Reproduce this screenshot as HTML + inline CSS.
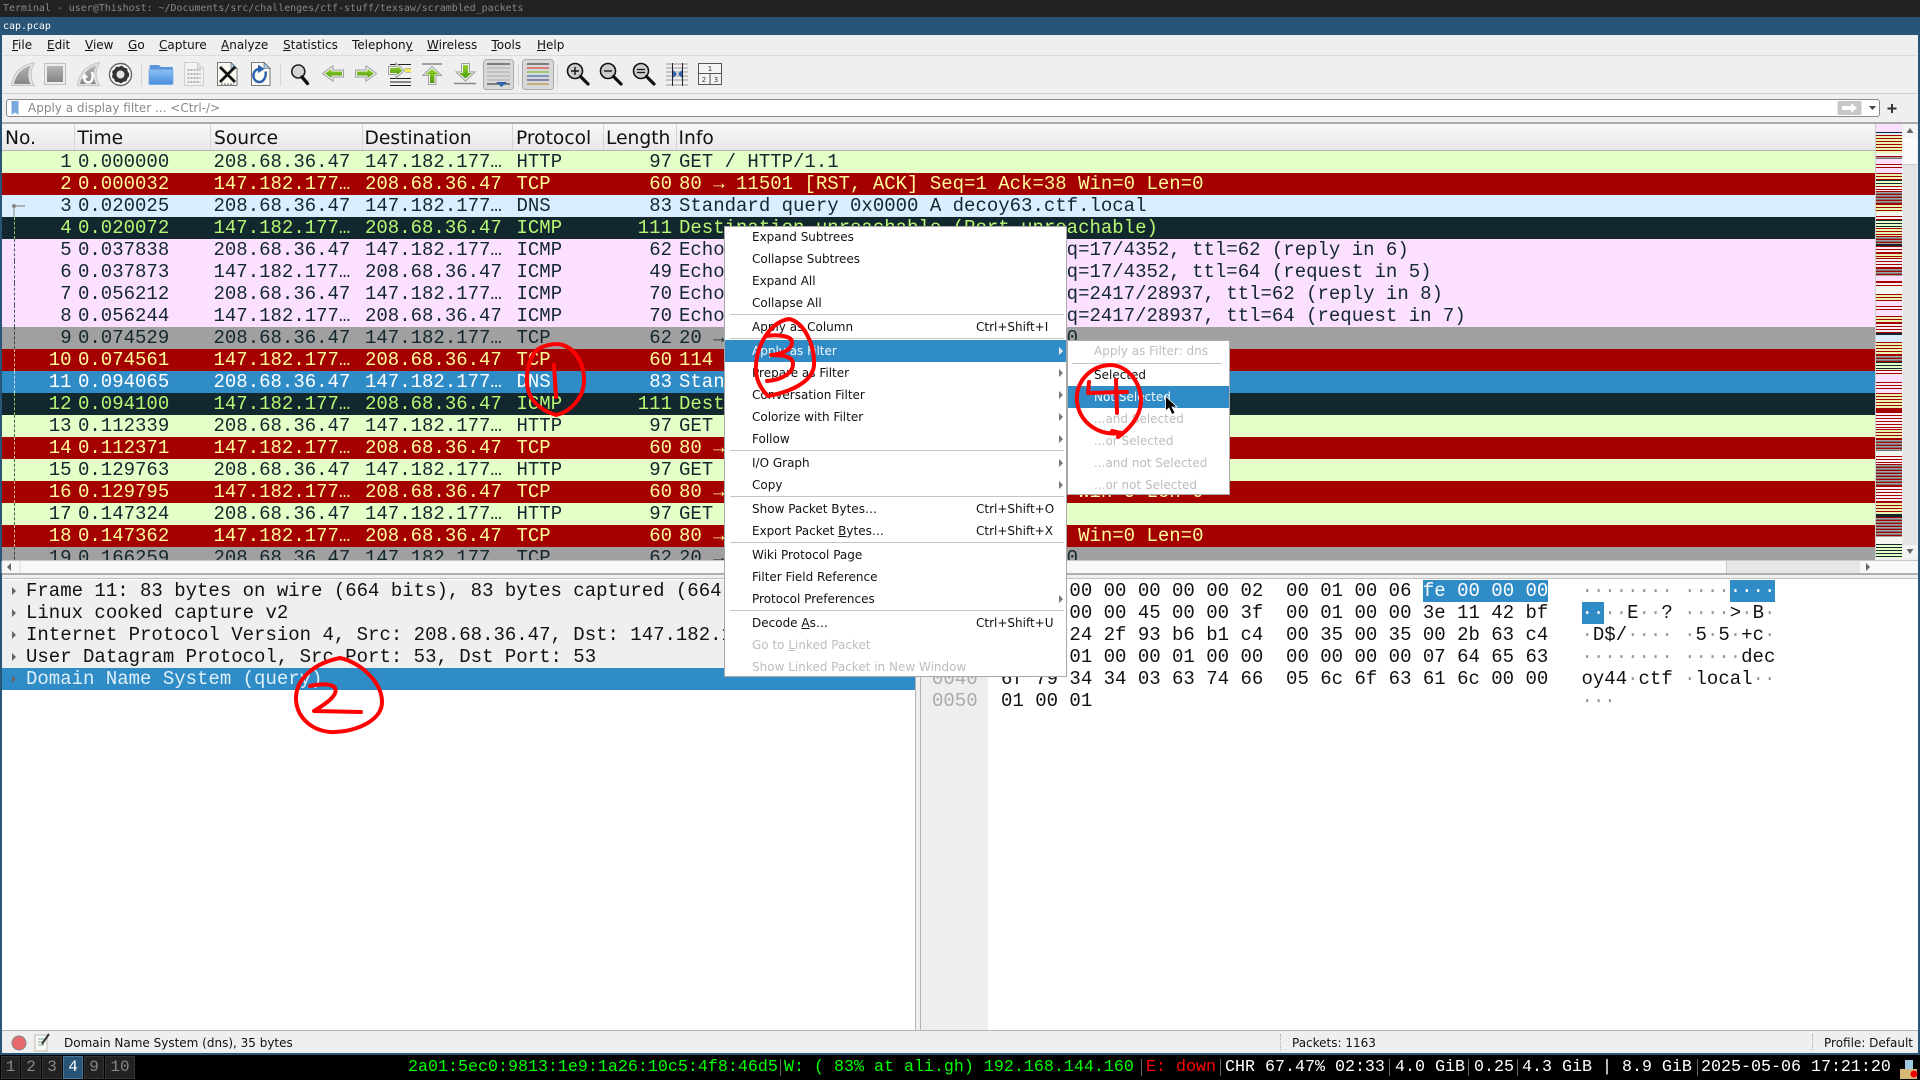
<!DOCTYPE html>
<html><head><meta charset="utf-8"><title>cap.pcap</title>
<style>
*{box-sizing:border-box}
html,body{margin:0;padding:0;width:1920px;height:1080px;overflow:hidden;background:#efefef}
body{position:relative;font-family:"DejaVu Sans","Liberation Sans",sans-serif;font-size:12px;color:#111}
.a{position:absolute}
.m{font-family:"Liberation Mono",monospace;font-size:19px;line-height:22px;white-space:pre}
.tt{font-family:"DejaVu Sans Mono",monospace;font-size:9.95px;line-height:18px;white-space:pre}
.menu span{position:absolute;top:0;line-height:20px;white-space:pre}
u{text-decoration:underline}
.h span{position:absolute;top:125px;line-height:27px;font-size:18.67px;color:#111;white-space:pre}
.h i{position:absolute;top:124px;width:1px;height:26px;background:#d4d4d4}
.r{position:absolute;left:2px;width:1873px;height:22px;overflow:hidden}
.r i{position:absolute;top:0;font-style:normal}
.r .n{left:0;width:69.6px;text-align:right}
.r .t{left:76px}.r .s{left:211.5px}.r .d{left:363px}.r .p{left:514.5px}
.r .l{left:570px;width:100px;text-align:right}.r .f{left:677px}
.r:before{content:"";position:absolute;left:12px;top:0;height:22px;border-left:1px dashed currentColor;opacity:.75}
.r.nl:before{display:none}
.G{background:#e4ffc7;color:#12272e}.R{background:#a40000;color:#fffc9c}.B{background:#daeeff;color:#12272e}
.K{background:#12272e;color:#b7f774}.P{background:#fce0ff;color:#12272e}.Y{background:#a0a0a0;color:#12272e}.S{background:#308cc6;color:#fff}
.tr{position:absolute;left:2px;width:913px;height:22px;background:#efefef;color:#111;padding-left:24px;overflow:hidden}
.tr:before{content:"";position:absolute;left:10px;top:7px;border-left:4px solid #666;border-top:4px solid transparent;border-bottom:4px solid transparent}
.hx{position:absolute;left:1001px;color:#111}.as{position:absolute;left:1581.5px;color:#111}
.off{position:absolute;left:932px;color:#aaa}
.sel{background:#308cc6;color:#fff;display:inline-block;height:22px}
.g{color:#999}
.it{position:absolute;left:27px;line-height:22px;height:22px;white-space:pre;color:#111}
.it b{position:absolute;left:252px;top:0;font-weight:normal}
.it.x{color:#bdbdbd}
.it.on{left:0;width:341px;padding-left:27px;background:#308cc6;color:#f4f8fc}
.sp{position:absolute;left:5px;height:1px;background:#c4c4c4;width:334px}
.ar{position:absolute;left:334px;border-left:4px solid #777;border-top:4px solid transparent;border-bottom:4px solid transparent}
.sub .it{left:26px}.sub .it.on{left:0;width:161px;padding-left:26px}
.bar span{position:absolute;top:0;line-height:25px;font-family:"Liberation Mono",monospace;font-size:16.67px;white-space:pre}
.ws{position:absolute;top:1056px;height:23px;background:#222;border:1px solid #333;color:#888;font-family:"Liberation Mono",monospace;font-size:16px;line-height:21px;text-align:center}
.mm div{width:100%}
.v1{background:repeating-linear-gradient(#a40000 0 1px,#e8f4b0 1px 3px)}
.v2{background:repeating-linear-gradient(#a40000 0 1px,#a0a0a0 1px 2px,#777 2px 3px)}
.v3{background:repeating-linear-gradient(#12272e 0 1px,#e4ffc7 1px 3px)}
.v4{background:#fce0ff}.v5{background:#f4f6f0}.v6{background:#a40000}.v7{background:#daeeff}.v8{background:#12272e}
.v9{background:repeating-linear-gradient(#a40000 0 1px,#fbeef5 1px 3px)}
</style></head><body>

<!-- title bars -->
<div class="a" style="left:0;top:0;width:1920px;height:17px;background:#222"></div>
<div class="a tt" style="left:3px;top:0;color:#888">Terminal - user@Thishost: ~/Documents/src/challenges/ctf-stuff/texsaw/scrambled_packets</div>
<div class="a" style="left:0;top:17px;width:1920px;height:1038px;background:#285577"></div>
<div class="a tt" style="left:3px;top:18px;color:#fff">cap.pcap</div>

<!-- window body -->
<div class="a" style="left:2px;top:35px;width:1916px;height:1018px;background:#efefef"></div>
<div class="a menu" style="left:0;top:35px;width:1900px;height:20px">
<span style="left:12px"><u>F</u>ile</span><span style="left:47px"><u>E</u>dit</span><span style="left:85px"><u>V</u>iew</span><span style="left:128px"><u>G</u>o</span><span style="left:159px"><u>C</u>apture</span><span style="left:221px"><u>A</u>nalyze</span><span style="left:283px"><u>S</u>tatistics</span><span style="left:352px">Telephon<u>y</u></span><span style="left:427px"><u>W</u>ireless</span><span style="left:491.5px"><u>T</u>ools</span><span style="left:537px"><u>H</u>elp</span>
</div>
<div class="a" style="left:2px;top:55px;width:1916px;height:1px;background:#dcdcdc"></div>
<div class="a" style="left:2px;top:93px;width:1916px;height:1px;background:#d0d0d0"></div>
<div class="a" style="left:2px;top:122px;width:1916px;height:2px;background:#ababab"></div>

<!-- filter -->
<div class="a" style="left:6px;top:99px;width:1874px;height:18px;background:#fff;border:1px solid #8a8a8a;border-radius:3px"></div>
<div class="a" style="left:28px;top:99px;line-height:18px;color:#888">Apply a display filter ... &lt;Ctrl-/&gt;</div>

<!-- header -->
<div class="a" style="left:2px;top:124px;width:1873px;height:27px;background:linear-gradient(#f8f8f8,#e8e8e8);border-bottom:1px solid #b4b4b4"></div>
<div class="h">
<span style="left:5px">No.</span><span style="left:77.5px">Time</span><span style="left:214px">Source</span><span style="left:364.5px">Destination</span><span style="left:516px">Protocol</span><span style="left:606px">Length</span><span style="left:678.5px">Info</span>
<i style="left:74px"></i><i style="left:210px"></i><i style="left:361.5px"></i><i style="left:512px"></i><i style="left:602.5px"></i><i style="left:675.5px"></i>
</div>

<!-- packets -->
<div class="m">
<div class="r G nl" style="top:151px"><i class="n">1</i><i class="t">0.000000</i><i class="s">208.68.36.47</i><i class="d">147.182.177…</i><i class="p">HTTP</i><i class="l">97</i><i class="f">GET / HTTP/1.1</i></div>
<div class="r R nl" style="top:173px"><i class="n">2</i><i class="t">0.000032</i><i class="s">147.182.177…</i><i class="d">208.68.36.47</i><i class="p">TCP</i><i class="l">60</i><i class="f">80 → 11501 [RST, ACK] Seq=1 Ack=38 Win=0 Len=0</i></div>
<div class="r B nl" style="top:195px"><i class="n">3</i><i class="t">0.020025</i><i class="s">208.68.36.47</i><i class="d">147.182.177…</i><i class="p">DNS</i><i class="l">83</i><i class="f">Standard query 0x0000 A decoy63.ctf.local</i></div>
<div class="r K" style="top:217px"><i class="n">4</i><i class="t">0.020072</i><i class="s">147.182.177…</i><i class="d">208.68.36.47</i><i class="p">ICMP</i><i class="l">111</i><i class="f">Destination unreachable (Port unreachable)</i></div>
<div class="r P" style="top:239px"><i class="n">5</i><i class="t">0.037838</i><i class="s">208.68.36.47</i><i class="d">147.182.177…</i><i class="p">ICMP</i><i class="l">62</i><i class="f">Echo (ping) request  id=0x0000, seq=17/4352, ttl=62 (reply in 6)</i></div>
<div class="r P" style="top:261px"><i class="n">6</i><i class="t">0.037873</i><i class="s">147.182.177…</i><i class="d">208.68.36.47</i><i class="p">ICMP</i><i class="l">49</i><i class="f">Echo (ping) reply    id=0x0000, seq=17/4352, ttl=64 (request in 5)</i></div>
<div class="r P" style="top:283px"><i class="n">7</i><i class="t">0.056212</i><i class="s">208.68.36.47</i><i class="d">147.182.177…</i><i class="p">ICMP</i><i class="l">70</i><i class="f">Echo (ping) request  id=0x0000, seq=2417/28937, ttl=62 (reply in 8)</i></div>
<div class="r P" style="top:305px"><i class="n">8</i><i class="t">0.056244</i><i class="s">147.182.177…</i><i class="d">208.68.36.47</i><i class="p">ICMP</i><i class="l">70</i><i class="f">Echo (ping) reply    id=0x0000, seq=2417/28937, ttl=64 (request in 7)</i></div>
<div class="r Y" style="top:327px"><i class="n">9</i><i class="t">0.074529</i><i class="s">208.68.36.47</i><i class="d">147.182.177…</i><i class="p">TCP</i><i class="l">62</i><i class="f">20 → 80 [SYN] Seq=0 Win=65535 Len=0</i></div>
<div class="r R" style="top:349px"><i class="n">10</i><i class="t">0.074561</i><i class="s">147.182.177…</i><i class="d">208.68.36.47</i><i class="p">TCP</i><i class="l">60</i><i class="f">114 → 20 [RST, ACK] Seq=1 Ack=1 Win=0 Len=0</i></div>
<div class="r S" style="top:371px"><i class="n">11</i><i class="t">0.094065</i><i class="s">208.68.36.47</i><i class="d">147.182.177…</i><i class="p">DNS</i><i class="l">83</i><i class="f">Standard query 0x0000 A decoy44.ctf.local</i></div>
<div class="r K" style="top:393px"><i class="n">12</i><i class="t">0.094100</i><i class="s">147.182.177…</i><i class="d">208.68.36.47</i><i class="p">ICMP</i><i class="l">111</i><i class="f">Destination unreachable (Port unreachable)</i></div>
<div class="r G" style="top:415px"><i class="n">13</i><i class="t">0.112339</i><i class="s">208.68.36.47</i><i class="d">147.182.177…</i><i class="p">HTTP</i><i class="l">97</i><i class="f">GET / HTTP/1.1</i></div>
<div class="r R" style="top:437px"><i class="n">14</i><i class="t">0.112371</i><i class="s">147.182.177…</i><i class="d">208.68.36.47</i><i class="p">TCP</i><i class="l">60</i><i class="f">80 → 11501 [RST, ACK] Seq=1 Ack=38 Win=0 Len=0</i></div>
<div class="r G" style="top:459px"><i class="n">15</i><i class="t">0.129763</i><i class="s">208.68.36.47</i><i class="d">147.182.177…</i><i class="p">HTTP</i><i class="l">97</i><i class="f">GET / HTTP/1.1</i></div>
<div class="r R" style="top:481px"><i class="n">16</i><i class="t">0.129795</i><i class="s">147.182.177…</i><i class="d">208.68.36.47</i><i class="p">TCP</i><i class="l">60</i><i class="f">80 → 11501 [RST, ACK] Seq=1 Ack=38 Win=0 Len=0</i></div>
<div class="r G" style="top:503px"><i class="n">17</i><i class="t">0.147324</i><i class="s">208.68.36.47</i><i class="d">147.182.177…</i><i class="p">HTTP</i><i class="l">97</i><i class="f">GET / HTTP/1.1</i></div>
<div class="r R" style="top:525px"><i class="n">18</i><i class="t">0.147362</i><i class="s">147.182.177…</i><i class="d">208.68.36.47</i><i class="p">TCP</i><i class="l">60</i><i class="f">80 → 11501 [RST, ACK] Seq=1 Ack=38 Win=0 Len=0</i></div>
<div class="r Y" style="top:547px;height:13px"><i class="n">19</i><i class="t">0.166259</i><i class="s">208.68.36.47</i><i class="d">147.182.177…</i><i class="p">TCP</i><i class="l">62</i><i class="f">20 → 80 [SYN] Seq=0 Win=65535 Len=0</i></div>
</div>

<!-- minimap -->
<div class="a mm" style="left:1875px;top:124px;width:27px;height:434px;overflow:hidden;background:#fff;border-left:1px solid #ccc">
<div class="v4" style="height:8px"></div><div class="v8" style="height:1px"></div><div class="v7" style="height:2px"></div><div class="v1" style="height:18px"></div><div class="v5" style="height:3px"></div><div class="v2" style="height:3px"></div><div class="v4" style="height:5px"></div><div class="v9" style="height:4px"></div><div class="v4" style="height:5px"></div><div class="v1" style="height:7px"></div><div class="v3" style="height:6px"></div><div class="v9" style="height:5px"></div><div class="v2" style="height:13px"></div><div class="v1" style="height:8px"></div><div class="v5" style="height:4px"></div><div class="v9" style="height:4px"></div><div class="v3" style="height:8px"></div><div class="v1" style="height:8px"></div><div class="v2" style="height:8px"></div><div class="v8" style="height:2px"></div><div class="v9" style="height:7px"></div><div class="v1" style="height:5px"></div><div class="v9" style="height:10px"></div><div class="v2" style="height:8px"></div><div class="v4" style="height:5px"></div><div class="v6" style="height:1px"></div><div class="v9" style="height:4px"></div><div class="v5" style="height:8px"></div><div class="v1" style="height:7px"></div><div class="v4" style="height:5px"></div><div class="v9" style="height:4px"></div><div class="v4" style="height:6px"></div><div class="v1" style="height:7px"></div><div class="v9" style="height:10px"></div><div class="v8" style="height:2px"></div><div class="v7" style="height:7px"></div><div class="v1" style="height:13px"></div><div class="v2" style="height:7px"></div><div class="v3" style="height:8px"></div><div class="v9" style="height:5px"></div><div class="v4" style="height:7px"></div><div class="v9" style="height:7px"></div><div class="v4" style="height:4px"></div><div class="v1" style="height:16px"></div><div class="v6" style="height:3px"></div><div class="v9" style="height:17px"></div><div class="v1" style="height:10px"></div><div class="v2" style="height:12px"></div><div class="v5" style="height:5px"></div><div class="v9" style="height:8px"></div><div class="v2" style="height:22px"></div><div class="v9" style="height:16px"></div><div class="v1" style="height:12px"></div><div class="v8" style="height:3px"></div><div class="v2" style="height:20px"></div><div class="v5" style="height:7px"></div><div class="v3" style="height:14px"></div>
</div>
<!-- v scrollbar -->
<div class="a" style="left:1903px;top:124px;width:14px;height:434px;background:#e4e4e4"></div>
<div class="a" style="left:1903px;top:124px;width:14px;height:14px;background:#f4f4f4"></div>
<div class="a" style="left:1903px;top:138px;width:14px;height:27px;background:#fafafa;border-bottom:1px solid #ccc"></div>
<div class="a" style="left:1903px;top:545px;width:14px;height:13px;background:#f4f4f4"></div>
<!-- h scrollbar -->
<div class="a" style="left:2px;top:560px;width:1916px;height:13px;background:#f8f8f8;border-top:1px solid #c8c8c8"></div>
<div class="a" style="left:1726px;top:561px;width:134px;height:12px;background:#e6e6e6;border-left:1px solid #ccc"></div>
<div class="a" style="left:2px;top:573px;width:1916px;height:6px;background:#efefef;border-top:2px solid #aeaeae;border-bottom:1px solid #c0c0c0"></div>

<!-- panes -->
<div class="a" style="left:2px;top:579px;width:914px;height:451px;background:#fff"></div>
<div class="a" style="left:915px;top:579px;width:6px;height:451px;background:#efefef;border-left:1px solid #b4b4b4;border-right:1px solid #b4b4b4"></div>
<div class="a" style="left:921px;top:579px;width:997px;height:451px;background:#fff"></div>
<div class="a" style="left:921px;top:579px;width:67px;height:451px;background:#eee"></div>
<div class="a" style="left:2px;top:1030px;width:1916px;height:1px;background:#b4b4b4"></div>

<div class="m">
<div class="tr" style="top:580px">Frame 11: 83 bytes on wire (664 bits), 83 bytes captured (664 bits) on interface any, id 0</div>
<div class="tr" style="top:602px">Linux cooked capture v2</div>
<div class="tr" style="top:624px">Internet Protocol Version 4, Src: 208.68.36.47, Dst: 147.182.177.23</div>
<div class="tr" style="top:646px">User Datagram Protocol, Src Port: 53, Dst Port: 53</div>
<div class="tr" style="top:668px;background:#308cc6;color:#dff0fb">Domain Name System (query)</div>

<div class="off" style="top:580px">0000</div><div class="off" style="top:602px">0010</div><div class="off" style="top:624px">0020</div><div class="off" style="top:646px">0030</div><div class="off" style="top:668px">0040</div><div class="off" style="top:690px">0050</div>
<div class="hx" style="top:580px">00 00 00 00 00 00 00 02  00 01 00 06 <span class="sel">fe 00 00 00</span></div>
<div class="hx" style="top:602px"><span class="sel">00 00</span> 00 00 45 00 00 3f  00 01 00 00 3e 11 42 bf</div>
<div class="hx" style="top:624px">d0 44 24 2f 93 b6 b1 c4  00 35 00 35 00 2b 63 c4</div>
<div class="hx" style="top:646px">00 00 01 00 00 01 00 00  00 00 00 00 07 64 65 63</div>
<div class="hx" style="top:668px">6f 79 34 34 03 63 74 66  05 6c 6f 63 61 6c 00 00</div>
<div class="hx" style="top:690px">01 00 01</div>
<div class="as" style="top:580px"><span class="g">········ ····</span><span class="sel">····</span></div>
<div class="as" style="top:602px"><span class="sel">··</span><span class="g">··</span>E<span class="g">··</span>? <span class="g">····</span>&gt;<span class="g">·</span>B<span class="g">·</span></div>
<div class="as" style="top:624px"><span class="g">·</span>D$/<span class="g">····</span> <span class="g">·</span>5<span class="g">·</span>5<span class="g">·</span>+c<span class="g">·</span></div>
<div class="as" style="top:646px"><span class="g">········ ·····</span>dec</div>
<div class="as" style="top:668px">oy44<span class="g">·</span>ctf <span class="g">·</span>local<span class="g">··</span></div>
<div class="as" style="top:690px"><span class="g">···</span></div>
</div>

<!-- status bar -->
<div class="a" style="left:64px;top:1032px;line-height:23px">Domain Name System (dns), 35 bytes</div>
<div class="a" style="left:1292px;top:1032px;line-height:23px">Packets: 1163</div>
<div class="a" style="left:1824px;top:1032px;line-height:23px">Profile: Default</div>
<div class="a" style="left:1280px;top:1034px;height:16px;border-left:1px dotted #aaa"></div>
<div class="a" style="left:1812px;top:1034px;height:16px;border-left:1px dotted #aaa"></div>

<!-- taskbar -->
<div class="a" style="left:0;top:1055px;width:1920px;height:25px;background:#000"></div>
<div class="ws" style="left:1px;width:19px">1</div><div class="ws" style="left:21px;width:20px">2</div><div class="ws" style="left:42px;width:20px">3</div>
<div class="ws" style="left:63px;width:20px;background:#285577;border-color:#4c7899;color:#fff">4</div>
<div class="ws" style="left:84px;width:20px">9</div><div class="ws" style="left:105px;width:30px">10</div>
<div class="a bar" style="left:0;top:1055px;width:1920px;height:25px">
<span style="left:408px;color:#0f0">2a01:5ec0:9813:1e9:1a26:10c5:4f8:46d5</span><span style="left:784px;color:#0f0">W: ( 83% at ali.gh) 192.168.144.160</span><span style="left:1146px;color:#f00">E: down</span><span style="left:1225px;color:#fff">CHR 67.47% 02:33</span><span style="left:1395px;color:#fff">4.0 GiB</span><span style="left:1474px;color:#fff">0.25</span><span style="left:1522px;color:#fff">4.3 GiB | 8.9 GiB</span><span style="left:1701px;color:#fff">2025-05-06 17:21:20</span>
</div>
<div class="a" style="left:780px;top:1059px;width:1px;height:17px;background:#666"></div><div class="a" style="left:1141px;top:1059px;width:1px;height:17px;background:#666"></div><div class="a" style="left:1220px;top:1059px;width:1px;height:17px;background:#666"></div><div class="a" style="left:1389px;top:1059px;width:1px;height:17px;background:#666"></div><div class="a" style="left:1468px;top:1059px;width:1px;height:17px;background:#666"></div><div class="a" style="left:1517px;top:1059px;width:1px;height:17px;background:#666"></div><div class="a" style="left:1697px;top:1059px;width:1px;height:17px;background:#666"></div>

<!-- icons -->
<svg class="a" style="left:0;top:0" width="1920" height="1080" viewBox="0 0 1920 1080">
<defs>
<linearGradient id="fin" x1="0" y1="0" x2="0" y2="1"><stop offset="0" stop-color="#b4b4b4"/><stop offset="1" stop-color="#868686"/></linearGradient>
<linearGradient id="fold" x1="0" y1="0" x2="0" y2="1"><stop offset="0" stop-color="#8cc0f4"/><stop offset="1" stop-color="#4a8cdc"/></linearGradient>
<linearGradient id="grn" x1="0" y1="0" x2="0" y2="1"><stop offset="0" stop-color="#94d028"/><stop offset="1" stop-color="#4c9a10"/></linearGradient>
</defs>
<!-- toolbar separators -->
<g stroke="#d4d4d4"><path d="M141.5 65V86M280.5 65V86M518.5 65V86M557.5 65V86"/></g>
<!-- shark start -->
<path d="M11.5 85.5C13 73 21 65 34.5 62.5C30 71 30 79 34.5 85.5Z" fill="#e4e4e4" stroke="#c4c4c4"/>
<path d="M14 84C16 74 22 68 31 65.5C27.5 72 27.5 78 30.5 84Z" fill="url(#fin)"/>
<!-- stop -->
<rect x="44.5" y="63.5" width="21" height="21" fill="#ececec" stroke="#c0c0c0"/><rect x="47" y="66" width="16" height="16" fill="url(#fin)"/>
<!-- restart -->
<path d="M77.5 85.5C79 73 87 65 99.5 62.5C95 71 95 79 99.5 85.5Z" fill="#e4e4e4" stroke="#c4c4c4"/>
<path d="M80 84C82 74 88 68 96.5 65.5C93 72 93 78 96 84Z" fill="url(#fin)"/>
<path d="M92 72C94 79 91 83 88 82.5C85 82 84 80 84.5 77" fill="none" stroke="#fff" stroke-width="2.5"/>
<path d="M81.5 78.5L84.5 73.5L88.5 77.5Z" fill="#fff"/>
<!-- gear -->
<circle cx="120.5" cy="74.5" r="11" fill="#fff" stroke="#666" stroke-width="1.4"/>
<circle cx="120.5" cy="74.5" r="8" fill="#333"/>
<circle cx="120.5" cy="74.5" r="7.5" fill="none" stroke="#333" stroke-width="2.4" stroke-dasharray="2.5 2.5"/>
<circle cx="120.5" cy="74.5" r="4" fill="#e4e4e4"/>
<!-- folder -->
<path d="M149.5 69V66.5C149.500 65.500 150 65 151 65H159L161 67H172C172.700 67 173 67.500 173 68V70H149.500Z" fill="#5a96dc"/>
<rect x="149" y="69.500" width="24" height="15" rx="1" fill="url(#fold)" stroke="#6ea4dc" stroke-width=".7"/>
<!-- file -->
<path d="M184.500 62.500H197.500L203.500 68.500V85.500H184.500Z" fill="#f2f2f2" stroke="#cfcfcf"/>
<path d="M197.500 62.500V68.500H203.500" fill="#ddd" stroke="#cfcfcf"/>
<path d="M187.500 70H200.500M187.500 74H200.500M187.500 78H200.500M187.500 82H200.500" stroke="#b5b5b5" stroke-width="2" stroke-dasharray="2 1"/>
<!-- close file -->
<path d="M217.500 62.500H231L237 68.500V85.500H217.500Z" fill="#fbfbf4" stroke="#555" stroke-width=".8"/>
<path d="M231 62.500L237 68.500H231Z" fill="#a8cfe8" stroke="#555" stroke-width=".6"/>
<path d="M220 67L235 82M235 67L220 82" stroke="#111" stroke-width="2.8"/>
<path d="M221 84.200H234" stroke="#999" stroke-width="1.6" stroke-dasharray="2 1"/>
<!-- reload -->
<path d="M251.500 62.500H264L270 68.500V85.500H251.500Z" fill="#fbfbf4" stroke="#555" stroke-width=".8"/>
<path d="M264 62.500L270 68.500H264Z" fill="#a8cfe8" stroke="#555" stroke-width=".6"/>
<path d="M265.500 71.500C266.500 76 264 82 259.500 82C255 82 253 78 253.500 74.500C254 71 256.500 69 260 69" fill="none" stroke="#2a5fb0" stroke-width="2.4"/>
<path d="M258 64.500L264.500 69L258 73Z" fill="#2a5fb0"/>
<!-- find -->
<circle cx="298.300" cy="71.500" r="6.500" fill="#d4d4d4" stroke="#222" stroke-width="1.600"/>
<path d="M302 77L307.500 83.500" stroke="#111" stroke-width="3.400" stroke-linecap="round"/>
<!-- left / right arrows -->
<path d="M322.500 73.500L333 65.800V70H343.500V77H333V81.200Z" fill="#f4f4f4" stroke="#9e9e9e" stroke-width="1"/>
<path d="M325 73.500L331.500 69V71.500H342V75.500H331.500V78Z" fill="url(#grn)"/>
<path d="M376.500 73.500L366 65.800V70H355.500V77H366V81.200Z" fill="#f4f4f4" stroke="#9e9e9e" stroke-width="1"/>
<path d="M374 73.500L367.500 69V71.500H357V75.500H367.500V78Z" fill="url(#grn)"/>
<!-- go to packet -->
<path d="M390 64.500H411M390 78.500H411M390 82H411M390 85.500H411" stroke="#222"/>
<path d="M405 68.500H411M405 72H411" stroke="#222" stroke-width=".6"/>
<rect x="405" y="68.500" width="6" height="3.500" fill="#f3e660"/>
<path d="M404.500 70.500L396 63V66.500H388.500V74.500H396V78Z" fill="#f4f4f4" stroke="#9e9e9e"/>
<path d="M402.500 70.500L397 66V68H390V73H397V75Z" fill="url(#grn)"/>
<!-- up -->
<path d="M422 64H442" stroke="#888" stroke-width="1.600"/>
<path d="M432 66.500L422.800 75.500H428.500V84.500H436V75.500H441.500Z" fill="#f4f4f4" stroke="#9e9e9e"/>
<path d="M432 69L425.500 74.500H430V83H434.500V74.500H439Z" fill="url(#grn)"/>
<!-- down -->
<path d="M454 83.500H476" stroke="#888" stroke-width="1.600"/>
<path d="M465.500 81L456 72H461.500V63.500H469.500V72H475Z" fill="#f4f4f4" stroke="#9e9e9e"/>
<path d="M465.500 78.500L459 73H463V65H468V73H472Z" fill="url(#grn)"/>
<!-- autoscroll pressed -->
<rect x="483.500" y="59.500" width="30" height="30" rx="3" fill="#d8d8d8" stroke="#aaa"/>
<path d="M487 64H510" stroke="#222"/><path d="M487 68H510M487 72H510M487 76H510M487 80H510" stroke="#aaa"/><path d="M487 84H510" stroke="#222"/>
<path d="M496 82H507L501.500 87Z" fill="#2f62ae"/>
<!-- colorize pressed -->
<rect x="522.500" y="59.500" width="31" height="30" rx="3" fill="#d8d8d8" stroke="#aaa"/>
<path d="M527 64H549" stroke="#222"/><path d="M527 68H549" stroke="#e02020"/><path d="M527 72H549" stroke="#60c010"/><path d="M527 76H549" stroke="#2050b0"/><path d="M527 80H549" stroke="#2a2a7a"/><path d="M527 84H549" stroke="#b08a20"/>
<!-- zoom in/out/reset -->
<circle cx="575" cy="71" r="7.500" fill="#ccc" stroke="#111" stroke-width="1.600"/><path d="M580.500 76.500L588 84" stroke="#111" stroke-width="3.200" stroke-linecap="round"/><path d="M571 71H579M575 67V75" stroke="#111" stroke-width="1.400"/>
<circle cx="608" cy="71" r="7.500" fill="#ccc" stroke="#111" stroke-width="1.600"/><path d="M613.500 76.500L621 84" stroke="#111" stroke-width="3.200" stroke-linecap="round"/><path d="M604 71H612" stroke="#111" stroke-width="1.400"/>
<circle cx="641" cy="71" r="7.500" fill="#ccc" stroke="#111" stroke-width="1.600"/><path d="M646.500 76.500L654 84" stroke="#111" stroke-width="3.200" stroke-linecap="round"/><path d="M637 69.500H645M637 72.500H645" stroke="#111" stroke-width="1.300"/>
<!-- resize cols -->
<path d="M666 64H688M666 68H688M666 72H688M666 76H688M666 80H688M666 85H688" stroke="#999"/>
<path d="M672.500 63V86M682.500 63V86" stroke="#222"/>
<path d="M673 70V78L677 74ZM682 70V78L678 74Z" fill="#2f62ae"/>
<!-- layout -->
<rect x="698.500" y="63.500" width="23" height="21" fill="#f4f4f4" stroke="#555"/>
<path d="M698.500 73.500H721.500M710 73.500V84.500" stroke="#555"/>
<text x="710" y="71" font-size="7" font-family="DejaVu Sans" fill="#333" text-anchor="middle">1</text>
<text x="704" y="82" font-size="7" font-family="DejaVu Sans" fill="#333" text-anchor="middle">2</text>
<text x="716" y="82" font-size="7" font-family="DejaVu Sans" fill="#333" text-anchor="middle">3</text>
<!-- bookmark, go, dropdown, plus -->
<path d="M11.500 101H18.500V115L15 112.500L11.500 115Z" fill="#7aa7dc"/>
<rect x="1837.500" y="101" width="24" height="14" rx="2" fill="#c8c8c8"/>
<path d="M1842 106H1851V103L1857 108L1851 113V110H1842Z" fill="#fff"/>
<path d="M1869 106H1876L1872.500 110Z" fill="#444"/>
<path d="M1892 104V113M1887.500 108.500H1896.500" stroke="#333" stroke-width="2"/>
<!-- scroll arrows -->
<path d="M1906.500 133L1910 128L1913.500 133Z" fill="#666"/><path d="M1906.500 549L1910 554L1913.500 549Z" fill="#666"/>
<path d="M11 563V571L7 567Z" fill="#666"/>
<path d="M1866 563V571L1870 567Z" fill="#666"/>
<path d="M2 561V573" stroke="#ddd"/>
<path d="M20 561V573" stroke="#ddd"/>
<!-- related packet hook -->
<path d="M14 206H25" stroke="#888" stroke-width="1.200"/><circle cx="14" cy="206" r="2" fill="#888"/><path d="M14 206V217" stroke="#888"/>
<!-- status icons -->
<ellipse cx="19" cy="1043" rx="7" ry="7" fill="#e8696b" stroke="#888"/>
<path d="M35 1035H47V1051H35Z" fill="#f8f8f0" stroke="#bbb"/>
<path d="M38 1039H44M38 1042H44M38 1045H44" stroke="#7aa"/>
<path d="M42 1044L49 1034" stroke="#333" stroke-width="2"/>
<!-- tray -->
<path d="M1905 1060H1913V1069H1905Z" fill="#9fc9e0"/><rect x="1900" y="1069" width="17" height="10" fill="#d8b878"/><circle cx="1914" cy="1074" r="3.500" fill="#e00"/>
</svg>

<!-- context menu -->
<div class="a" style="left:724px;top:226px;width:343px;height:451px;background:#fff;border:1px solid #a8a8a8">
<div class="it" style="top:-1px">Expand Subtrees</div>
<div class="it" style="top:21px">Collapse Subtrees</div>
<div class="it" style="top:43px">Expand All</div>
<div class="it" style="top:65px">Collapse All</div>
<div class="sp" style="top:87px"></div>
<div class="it" style="top:89px">Apply as Column<b style="left:224px">Ctrl+Shift+I</b></div>
<div class="sp" style="top:111px"></div>
<div class="it on" style="top:113px">Apply as Filter</div><div class="ar" style="top:120px;border-left-color:#eee"></div>
<div class="it" style="top:135px">Prepare as Filter</div><div class="ar" style="top:142px"></div>
<div class="it" style="top:157px">Conversation Filter</div><div class="ar" style="top:164px"></div>
<div class="it" style="top:179px">Colorize with Filter</div><div class="ar" style="top:186px"></div>
<div class="it" style="top:201px">Follow</div><div class="ar" style="top:208px"></div>
<div class="sp" style="top:223px"></div>
<div class="it" style="top:225px">I/O Graph</div><div class="ar" style="top:232px"></div>
<div class="it" style="top:247px">Copy</div><div class="ar" style="top:254px"></div>
<div class="sp" style="top:269px"></div>
<div class="it" style="top:271px">Show Packet Bytes…<b style="left:224px">Ctrl+Shift+O</b></div>
<div class="it" style="top:293px">Export Packet <u>B</u>ytes…<b style="left:224px">Ctrl+Shift+X</b></div>
<div class="sp" style="top:315px"></div>
<div class="it" style="top:317px">Wiki Protocol Page</div>
<div class="it" style="top:339px">Filter Field Reference</div>
<div class="it" style="top:361px">Protocol Preferences</div><div class="ar" style="top:368px"></div>
<div class="sp" style="top:383px"></div>
<div class="it" style="top:385px">Decode <u>A</u>s…<b style="left:224px">Ctrl+Shift+U</b></div>
<div class="it x" style="top:407px">Go to <u>L</u>inked Packet</div>
<div class="it x" style="top:429px">Show Linked Packet in New Window</div>
</div>
<!-- submenu -->
<div class="a sub" style="left:1067px;top:340px;width:163px;height:155px;background:#fff;border:1px solid #a8a8a8">
<div class="it x" style="top:-1px">Apply as Filter: dns</div>
<div class="sp" style="top:22px;width:150px;left:4px"></div>
<div class="it" style="top:23px">Selected</div>
<div class="it on" style="top:45px">Not Selected</div>
<div class="it x" style="top:67px">...and Selected</div>
<div class="it x" style="top:89px">...or Selected</div>
<div class="it x" style="top:111px">...and not Selected</div>
<div class="it x" style="top:133px">...or not Selected</div>
</div>

<!-- annotations and cursor -->
<svg class="a" style="left:0;top:0;pointer-events:none" width="1920" height="1080" viewBox="0 0 1920 1080">
<g fill="none" stroke="#f00" stroke-width="4" stroke-linecap="round" stroke-linejoin="round">
<path d="M558 344C574 346 584 362 584 380C584 398 570 412 556 415C540 410 528 400 527 383C526 366 532 352 540 348C546 345 552 344 558 344"/>
<path d="M554 365L556 397"/>
<path d="M340 658C360 662 382 682 382 702C382 722 352 733 330 732C310 730 296 716 296 698C296 682 310 664 340 658"/>
<path d="M310 686C318 684 332 683 335 688C339 696 322 706 314 711L361 712"/>
<path d="M789 319C804 322 815 345 814 365C813 382 790 392 768 396C760 388 755 378 756 365C757 345 770 322 789 319"/>
<path d="M766 336C778 334 792 336 792 342C792 350 782 354 771 355C782 355 793 356 793 364C793 374 780 380 767 381"/>
<path d="M1120 433C1100 436 1080 424 1077 402C1075 382 1090 366 1110 365C1128 365 1142 384 1141 402C1140 418 1128 430 1118 437M1112 431L1121 433"/>
<path d="M1089 382L1088 393L1127 392M1116 380L1117 413"/>
</g>
<path d="M1165.500 396V411L1169 408L1172 414.500L1175 413L1172 407H1177Z" fill="#000" stroke="#fff" stroke-width=".8"/>
</svg>
</body></html>
